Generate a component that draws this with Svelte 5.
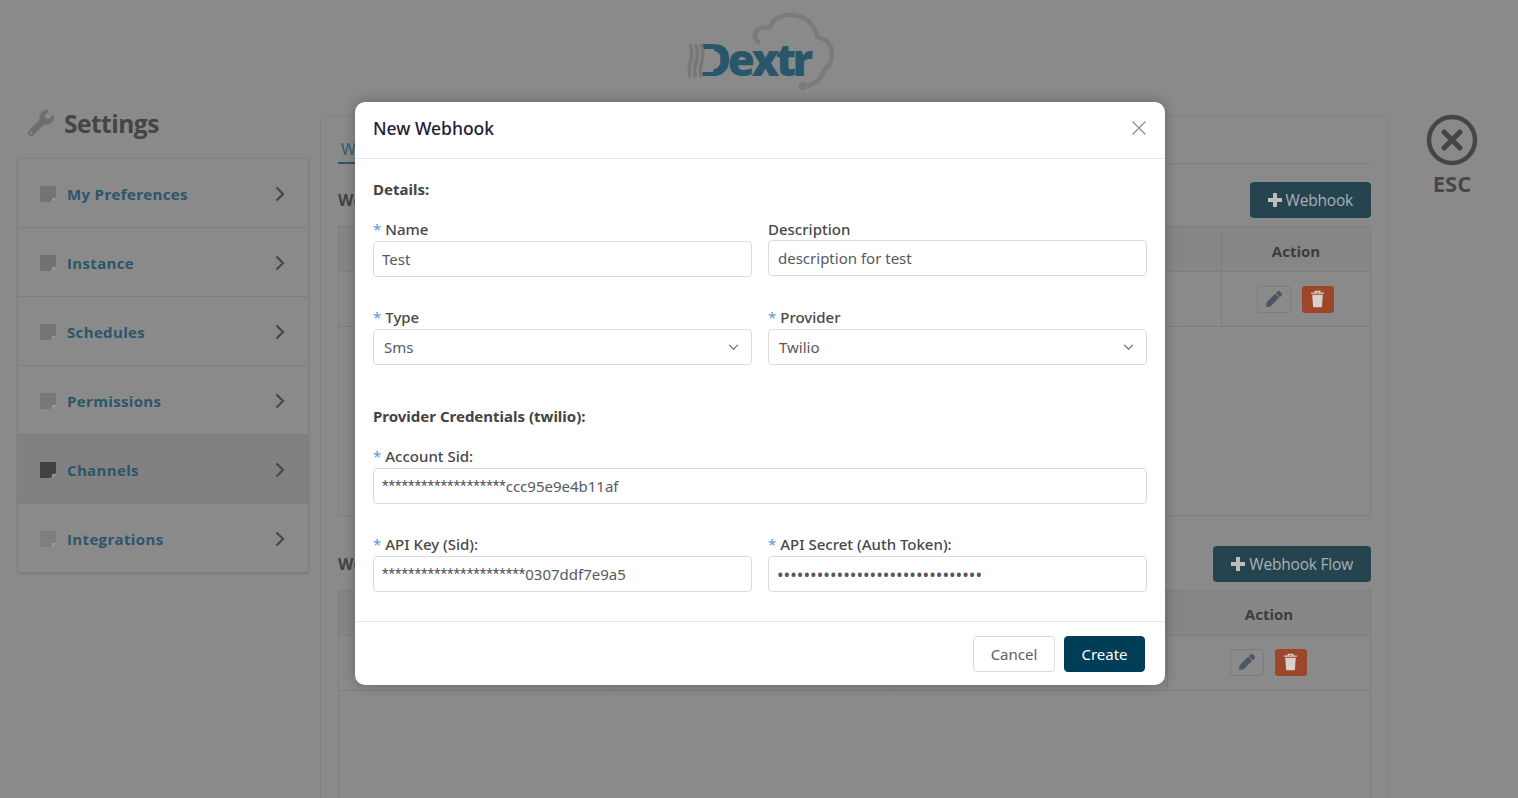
<script>
  const menu = [
    { label: "My Preferences", shade: "#747474" },
    { label: "Instance", shade: "#727272" },
    { label: "Schedules", shade: "#757575" },
    { label: "Permissions", shade: "#777777" },
    { label: "Channels", shade: "#434343", active: true },
    { label: "Integrations", shade: "#7f7f7f" }
  ];
  const pencil = "M497.9 142.1l-46.1 46.1c-4.7 4.7-12.3 4.7-17 0l-111-111c-4.7-4.7-4.7-12.3 0-17l46.1-46.1c18.7-18.7 49.1-18.7 67.9 0l60.1 60.1c18.8 18.7 18.8 49.1 0 67.9zM284.2 99.8L21.6 362.4.4 483.9c-2.9 16.4 11.4 30.6 27.8 27.8l121.5-21.3 262.6-262.6c4.7-4.7 4.7-12.3 0-17l-111-111c-4.8-4.7-12.4-4.7-17.1 0z";
  const wrench = "M507.73 109.1c-2.24-9.03-13.54-12.09-20.12-5.51l-74.36 74.36-67.88-11.31-11.31-67.88 74.36-74.36c6.62-6.62 3.43-17.9-5.66-20.16-47.38-11.74-99.55.91-136.58 37.93-39.64 39.64-50.55 97.1-34.05 147.2L18.74 402.76c-24.99 24.99-24.99 65.51 0 90.5 24.99 24.99 65.51 24.99 90.5 0l213.21-213.21c50.12 16.71 107.47 5.68 147.37-34.22 37.07-37.07 49.7-89.32 37.91-136.73zM64 472c-13.25 0-24-10.75-24-24 0-13.26 10.75-24 24-24s24 10.74 24 24c0 13.25-10.75 24-24 24z";
</script>

{#snippet actions()}
  <div class="actions">
    <button class="icon-btn edit" aria-label="Edit">
      <svg viewBox="0 0 512 512" width="16" height="16"><path d={pencil} fill="#4c5662" /></svg>
    </button>
    <button class="icon-btn del" aria-label="Delete">
      <svg viewBox="0 0 16 19" width="15" height="18">
        <path d="M1 3.2h14M5.6 3V1.400h4.800V3" fill="none" stroke="#d8d0cc" stroke-width="1.500" />
        <path d="M2.400 5h11.200l-.8 12c0 .8-.6 1.400-1.300 1.400H4.500c-.7 0-1.300-.6-1.300-1.400z" fill="#d8d0cc" />
      </svg>
    </button>
  </div>
{/snippet}

{#snippet plus()}
  <svg class="plus" viewBox="0 0 14 14" width="14" height="14"><path d="M5 0h4v5h5v4H9v5H5V9H0V5h5z" fill="#bdbdbd" /></svg>
{/snippet}

{#snippet chevron()}
  <svg viewBox="0 0 12 8" width="11" height="7"><path d="M1 1l5 5 5-5" fill="none" stroke="#666" stroke-width="1.300" /></svg>
{/snippet}

<div class="page">
  <header class="top">
    <div class="logo">
      <span class="logo-text">Dextr</span>
      <svg class="logo-art" viewBox="0 0 150 80" width="150" height="80">
        <path d="M75 33C68 30 68 20 76 18c4-1 7 0 9-1C88 8 98 4 108 5c12 1 22 9 24 22 8 1 15 7 15 17 0 8-4 14-9 16M140 58c-2 8-8 16-18 18" fill="none" stroke="#7b7b7b" stroke-width="4.500" />
        <circle cx="118" cy="76" r="4.500" fill="#7b7b7b" />
        <!-- the stem of the D is left out of the mark -->
        <path d="M17 39h12c2 8 1 15-1 23H16c2-8 3-15 1-23z" fill="#8a8a8a" />
        <g fill="none" stroke="#777" stroke-width="3.500">
          <path d="M5 34c3 9 2 14 0 20-1 4-1 9 0 13" />
          <path d="M10.500 34c3 9 2 14 0 20-1 4-1 9 0 13" />
          <path d="M16 34c3 9 2 14 0 20-1 4-1 9 0 13" />
        </g>
      </svg>
    </div>
  </header>

  <div class="main">
    <aside class="side">
      <h1 class="title">
        <svg viewBox="0 0 512 512" width="26" height="26"><path d={wrench} fill="#6e6e6e" /></svg>
        Settings
      </h1>
      <nav class="menu">
        {#each menu as item}
          <div class="menu-item" class:active={item.active}>
            <svg class="note" viewBox="0 0 16 16" width="16" height="16">
              <path d="M0 0h16v10.500L10.500 16H0z" fill={item.shade} />
              <path d="M12 12h4l-4 4z" fill="#9a9a9a" />
            </svg>
            <span class="menu-label">{item.label}</span>
            <svg class="chev" viewBox="0 0 10 16" width="10" height="16">
              <path d="M1.500 1.500L8 8l-6.500 6.500" fill="none" stroke="#474747" stroke-width="2.200" />
            </svg>
          </div>
        {/each}
      </nav>
    </aside>

    <section class="panel">
      <div class="tabs"><span class="tab">Webhooks</span></div>

      <div class="section-head first">
        <h2>Webhooks</h2>
        <button class="add">{@render plus()}Webhook</button>
      </div>
      <div class="table one">
        <div class="row head">
          <div class="cell">Name</div>
          <div class="cell">Action</div>
        </div>
        <div class="row body">
          <div class="cell"></div>
          <div class="cell">{@render actions()}</div>
        </div>
      </div>

      <div class="section-head second">
        <h2>Webhook Flows</h2>
        <button class="add">{@render plus()}Webhook Flow</button>
      </div>
      <div class="table two">
        <div class="row head">
          <div class="cell"></div>
          <div class="cell"></div>
          <div class="cell"></div>
          <div class="cell">Action</div>
        </div>
        <div class="row body">
          <div class="cell"></div>
          <div class="cell"></div>
          <div class="cell"></div>
          <div class="cell">{@render actions()}</div>
        </div>
      </div>
    </section>

    <div class="esc">
      <svg viewBox="0 0 52 52" width="52" height="52">
        <circle cx="26" cy="26" r="23" fill="none" stroke="#454545" stroke-width="4.500" />
        <path d="M18 18l16 16M34 18L18 34" fill="none" stroke="#454545" stroke-width="5" stroke-linecap="round" />
      </svg>
      <span>ESC</span>
    </div>
  </div>

  <div class="modal">
    <div class="modal-head">
      <h3>New Webhook</h3>
      <svg viewBox="0 0 14 14" width="14" height="14">
        <path d="M.5.5l13 13M13.500.5l-13 13" stroke="#8c8c8c" stroke-width="1.200" fill="none" />
      </svg>
    </div>
    <div class="modal-body">
      <div class="group-title">Details:</div>
      <div class="form-row r1">
        <label class="field"><span class="lab"><i>*</i>Name</span><input value="Test" /></label>
        <label class="field up"><span class="lab">Description</span><input value="description for test" /></label>
      </div>
      <div class="form-row r2">
        <div class="field"><span class="lab"><i>*</i>Type</span>
          <div class="select">Sms{@render chevron()}</div>
        </div>
        <div class="field"><span class="lab"><i>*</i>Provider</span>
          <div class="select">Twilio{@render chevron()}</div>
        </div>
      </div>
      <div class="group-title creds">Provider Credentials (twilio):</div>
      <div class="form-row r3 single">
        <div class="field"><span class="lab"><i>*</i>Account Sid:</span>
          <div class="masked"><span class="stars">*******************</span>ccc95e9e4b11af</div>
        </div>
      </div>
      <div class="form-row r2">
        <div class="field"><span class="lab"><i>*</i>API Key (Sid):</span>
          <div class="masked"><span class="stars">**********************</span>0307ddf7e9a5</div>
        </div>
        <label class="field"><span class="lab"><i>*</i>API Secret (Auth Token):</span><input class="secret" type="password" value="1234567890123456789012345678901" /></label>
      </div>
    </div>
    <div class="modal-foot">
      <button class="btn">Cancel</button>
      <button class="btn primary">Create</button>
    </div>
  </div>
</div>

<style>
  :global(body) {
    margin: 0;
    background: #8a8a8a;
  }
  .page {
    height: 100vh;
    overflow: hidden;
    background: #8a8a8a;
    font-family: "Open Sans", "Noto Sans", sans-serif;
    color: #444;
  }
  .top {
    height: 100px;
    display: flex;
    justify-content: center;
  }
  .logo {
    position: relative;
    width: 150px;
    height: 80px;
    margin: 10px 0 0 0;
    left: 1px;
  }
  .logo-art {
    position: absolute;
    left: 0;
    top: 0;
  }
  .logo-text {
    position: absolute;
    left: 14px;
    top: 22px;
    font-size: 44px;
    line-height: 54px;
    font-weight: 800;
    letter-spacing: -3.500px;
    color: #2a566a;
  }
  .main {
    display: flex;
    align-items: flex-start;
    padding-left: 17px;
  }
  .side {
    width: 292px;
    flex: none;
  }
  .title {
    height: 58px;
    margin: 0;
    padding: 0 0 12px 11px;
    box-sizing: border-box;
    display: flex;
    align-items: center;
    gap: 10px;
    font-size: 24.500px;
    font-weight: 700;
    letter-spacing: -0.5px;
    color: #454545;
  }
  .menu {
    border: 1px solid #808080;
    border-radius: 4px;
    box-shadow: 0 1px 2px rgba(0, 0, 0, 0.15);
  }
  .menu-item {
    box-sizing: border-box;
    display: flex;
    align-items: center;
    padding: 2px 23px 0 22px;
    border-bottom: 1px solid #7e7e7e;
    height: 69px;
  }
  .menu-item:last-child {
    border-bottom: 0;
    height: 68px;
  }
  .menu-item.active {
    background: #818181;
  }
  .menu-label {
    margin-left: 11px;
    flex: 1;
    font-size: 15px;
    font-weight: 700;
    letter-spacing: 0.35px;
    color: #2b566a;
  }
  .panel {
    width: 1068px;
    height: 700px;
    box-sizing: border-box;
    margin: 15px 0 0 11px;
    flex: none;
    padding: 0 16px 0 17px;
    border: 1px solid #828282;
    border-radius: 4px;
  }
  .tabs {
    height: 47px;
    display: flex;
    align-items: flex-end;
    border-bottom: 1px solid #7e7e7e;
    width: 1034px;
  }
  .tab {
    padding: 0 4px 2px 3px;
    font-size: 16px;
    color: #2e5a70;
    border-bottom: 2px solid #275a72;
    margin-bottom: -1px;
  }
  .section-head {
    display: flex;
    align-items: center;
    justify-content: space-between;
    height: 36px;
    width: 1033px;
    margin-bottom: 8px;
  }
  .section-head.first {
    margin-top: 18px;
  }
  .section-head.second {
    margin-top: 30px;
  }
  .section-head h2 {
    margin: 0;
    font-size: 16px;
    font-weight: 700;
    color: #444;
  }
  .add {
    height: 36px;
    padding: 0 18px;
    border: 0;
    border-radius: 4px;
    background: #25444f;
    color: #a9b1b5;
    font: 15.500px "Open Sans", sans-serif;
    letter-spacing: -0.2px;
    display: flex;
    align-items: center;
    gap: 4px;
  }
  .table {
    width: 1033px;
    box-sizing: border-box;
    border: 1px solid #7e7e7e;
  }
  .table.one {
    height: 290px;
  }
  .table.two {
    height: 300px;
  }
  .row {
    display: grid;
    border-bottom: 1px solid #7e7e7e;
  }
  .one .row {
    grid-template-columns: 1fr 149px;
  }
  .two .row {
    grid-template-columns: 276px 277px 275px 1fr;
  }
  .row.head {
    height: 44px;
    background: #868686;
  }
  .row.head .cell {
    padding-top: 3px;
    box-sizing: border-box;
  }
  .two .row.head .cell {
    padding-top: 1px;
  }
  .row.body {
    height: 54px;
  }
  .cell {
    display: flex;
    align-items: center;
    justify-content: center;
    border-left: 1px solid #7e7e7e;
    font-size: 15px;
    font-weight: 700;
    color: #3c3c3c;
  }
  .cell:first-child {
    border-left: 0;
  }
  .actions {
    display: flex;
    gap: 11px;
    margin-right: 2px;
  }
  .two .actions {
    margin-bottom: 2px;
  }
  .icon-btn {
    height: 27px;
    padding: 0;
    border-radius: 3px;
    display: flex;
    align-items: center;
    justify-content: center;
  }
  .edit {
    width: 34px;
    background: #8a8a8a;
    border: 1px solid #7c7c7c;
  }
  .del {
    width: 32px;
    background: #9d462b;
    border: 0;
  }
  .esc {
    width: 52px;
    margin: 14px 0 0 38px;
    display: flex;
    flex-direction: column;
    align-items: center;
    color: #474747;
    font-size: 22px;
    font-weight: 700;
    line-height: 34px;
  }
  .modal {
    position: absolute;
    left: 355px;
    top: 102px;
    width: 810px;
    height: 583px;
    background: #fff;
    border-radius: 10px;
    box-shadow: 0 0 14px rgba(0, 0, 0, 0.25);
    display: flex;
    flex-direction: column;
    font-family: "Noto Sans", "Open Sans", sans-serif;
  }
  .modal-head {
    height: 57px;
    flex: none;
    box-sizing: border-box;
    padding: 0 19px 4px 18px;
    border-bottom: 1px solid #e8e8e8;
    display: flex;
    align-items: center;
    justify-content: space-between;
  }
  .modal-head h3 {
    margin: 0 0 1px;
    font-size: 17.500px;
    font-weight: 500;
    color: #1a2233;
  }
  .modal-body {
    flex: 1;
    padding: 20px 18px 0;
  }
  .group-title {
    font-size: 15px;
    font-weight: 700;
    line-height: 20px;
    color: #444;
  }
  .group-title.creds {
    margin-top: 41px;
  }
  .form-row {
    display: grid;
    grid-template-columns: 379px 379px;
    gap: 16px;
    margin-top: 30px;
  }
  .form-row.r1 {
    margin-top: 20px;
  }
  .form-row.single {
    grid-template-columns: 774px;
    margin-top: 20px;
  }
  .field {
    display: flex;
    flex-direction: column;
  }
  .field.up input {
    margin-top: -1px;
    padding-left: 9px;
  }
  .lab {
    height: 22px;
    line-height: 20px;
    font-size: 15px;
    font-weight: 500;
    color: #484848;
  }
  .lab i {
    font-style: normal;
    font-weight: 400;
    color: #5b9bd5;
    margin-right: 4px;
  }
  input,
  .select,
  .masked {
    height: 36px;
    box-sizing: border-box;
    width: 100%;
    border: 1px solid #dcdcdc;
    border-radius: 4px;
    background: #fff;
    font-family: "Noto Sans", "Open Sans", sans-serif;
    font-size: 15px;
    color: #55595f;
    outline: none;
  }
  input {
    padding: 0 8px;
  }
  input.secret {
    font-size: 17.600px;
  }
  .masked {
    display: flex;
    align-items: center;
    padding: 0 8px;
  }
  .stars {
    font-family: Roboto, sans-serif;
    letter-spacing: 0.05px;
  }
  .select {
    display: flex;
    align-items: center;
    justify-content: space-between;
    padding: 0 12px 0 10px;
  }
  .modal-foot {
    height: 64px;
    flex: none;
    box-sizing: border-box;
    border-top: 1px solid #e8e8e8;
    padding: 14px 20px 0 0;
    display: flex;
    justify-content: flex-end;
    gap: 9px;
  }
  .btn {
    height: 36px;
    width: 82px;
    border: 1px solid #dcdcdc;
    border-radius: 4px;
    background: #fff;
    color: #5b6068;
    font: 15px "Noto Sans", sans-serif;
  }
  .btn.primary {
    width: 81px;
    background: #003e58;
    border-color: #003e58;
    color: #fff;
  }
</style>
